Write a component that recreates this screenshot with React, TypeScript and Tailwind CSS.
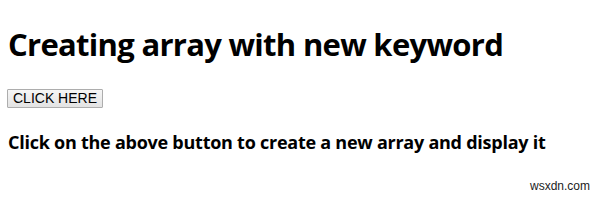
export default function App() {
  return (
    <div className="relative h-[204px] w-[600px] bg-white text-black" style={{ fontFamily: '"Open Sans", "Noto Sans", sans-serif' }}>
      <div className="px-2 pt-[24px]">
        <h1 className="text-[31px] font-bold leading-[40px] tracking-[-0.7px]">Creating array with new keyword</h1>
        <button className="ml-[-1px] mt-[25px] block h-[19px] rounded-[1px] border border-[#adadad] bg-gradient-to-b from-[#f6f6f6] to-[#e3e3e3] px-[5px] text-[14px] leading-[17px] font-['Liberation_Sans',sans-serif]">
          CLICK HERE
        </button>
        <p className="mt-[22px] text-[18px] font-bold leading-[24px] tracking-[-0.25px]">Click on the above button to create a new array and display it</p>
      </div>
      <div className="absolute right-[10px] bottom-[9px] text-[12px] text-[#222] font-['Liberation_Sans',sans-serif]">wsxdn.com</div>
    </div>
  );
}
